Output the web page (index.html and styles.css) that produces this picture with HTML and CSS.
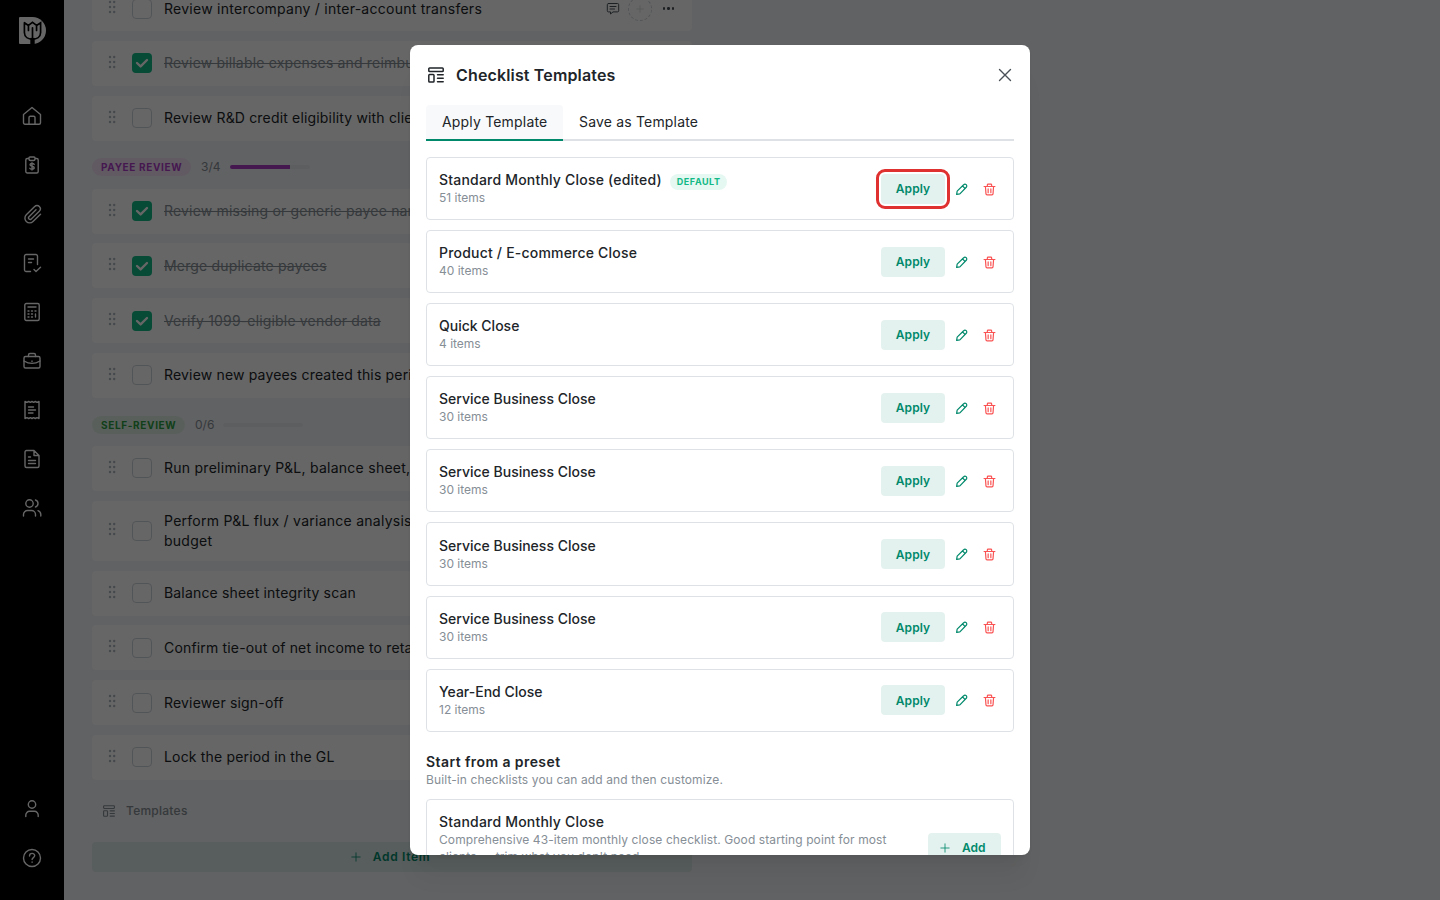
FILE: index.html
```html
<!DOCTYPE html>
<html lang="en">
<head>
  <meta charset="utf-8">
  <title>Checklist Templates</title>
  <link rel="stylesheet" href="styles.css">
</head>
<body>

  <svg class="sprite" width="0" height="0">
    <symbol id="i-grip" viewBox="0 0 8 14">
      <g fill="currentColor" stroke="none"><circle cx="2" cy="2" r="1.2"/><circle cx="6.2" cy="2" r="1.2"/><circle cx="2" cy="7" r="1.2"/><circle cx="6.2" cy="7" r="1.2"/><circle cx="2" cy="12" r="1.2"/><circle cx="6.2" cy="12" r="1.2"/></g>
    </symbol>
    <symbol id="i-template" viewBox="0 0 16 16">
      <rect x=".8" y="1" width="14.4" height="3.6" rx=".8"/><rect x=".8" y="7.6" width="5.2" height="7.4" rx=".8"/><path d="M9.5 7.8h5.7M9.5 11.3h5.7M9.5 14.8h5.7"/>
    </symbol>
    <symbol id="i-pencil" viewBox="0 0 24 24">
      <path d="M3 21l1-6L16 3.200a3 3 0 0 1 4.800 4.600L9 20zM14 5.500l4.500 4.500"/>
    </symbol>
    <symbol id="i-trash" viewBox="0 0 24 24">
      <path d="M2 6.500h20M4.500 7l1 13a2 2 0 0 0 2 2h9a2 2 0 0 0 2-2l1-13M8 6V3.500A1.500 1.500 0 0 1 9.500 2h5A1.500 1.500 0 0 1 16 3.500V6M9.500 11v7M14.500 11v7"/>
    </symbol>
    <symbol id="i-plus" viewBox="0 0 12 12"><path d="M6 1v10M1 6h10"/></symbol>
    <symbol id="i-check" viewBox="0 0 20 20"><path d="M5 10l3.600 3.400L15 7"/></symbol>
  </svg>

  <div class="app">
    <nav class="sidebar">
      <svg class="logo" viewBox="0 0 80 80">
        <path class="logo-base" d="M3 0H40A40 40 0 0 1 40 80H3Q0 80 0 77V3Q0 0 3 0Z"/>
        <path class="logo-line" d="M16 17V46C16 60 28 66 40 66C52 66 64 60 64 46V17L52 25V40M16 17L28 25V40M28 25L40 16L52 25M40 32V66"/>
        <path class="logo-stem" d="M40 62V80"/>
      </svg>
      <div class="nav-main">
        <svg class="nav-icon" viewBox="0 0 20 20"><path d="M1.500 8.500L10 1.500l8.500 7v8.300a1.500 1.500 0 0 1-1.500 1.500H3a1.500 1.500 0 0 1-1.500-1.500zM7 18v-6.500a1.300 1.300 0 0 1 1.300-1.300h3.400a1.300 1.300 0 0 1 1.300 1.300V18"/></svg>
        <svg class="nav-icon" viewBox="0 0 20 20"><rect x="3.800" y="3.500" width="12.400" height="14.500" rx="1.500"/><path class="solid" d="M8 2h4a1 1 0 0 1 1 1v1a1.500 1.500 0 0 1-1.500 1.500h-3A1.500 1.500 0 0 1 7 4V3a1 1 0 0 1 1-1z"/><path d="M12.200 9.400c-.4-.6-1.200-.9-2.200-.9-1.200 0-2 .5-2 1.300 0 2 4.200.9 4.200 3 0 .9-.9 1.400-2.200 1.400-1.100 0-1.900-.3-2.200-.9M10 7.800v7.200"/></svg>
        <svg class="nav-icon" viewBox="0 0 20 20"><path d="M14 5.800l-7 7a1.500 1.500 0 0 0 2.300 2.200l8-7.800a3.200 3.200 0 0 0-4.600-4.700l-8.400 8.300a4.700 4.700 0 0 0 6.700 6.700l7.500-7.300"/></svg>
        <svg class="nav-icon" viewBox="0 0 20 20"><path d="M8.500 18.500H4A1.800 1.800 0 0 1 2.500 17V3A1.800 1.800 0 0 1 4 1.500h10A1.800 1.800 0 0 1 15.500 3v8.500M6.500 6h5M6.500 9.500h3M12 16.500l2 2 4.500-4.200"/></svg>
        <svg class="nav-icon" viewBox="0 0 20 20"><rect x="2.800" y="1.500" width="14.400" height="17" rx="1.500"/><path d="M6 5h8M6 9h1M9.500 9h1M13 9h1M6 12h1M9.500 12h1M6 15h1M9.500 15h1M13.500 12v3"/></svg>
        <svg class="nav-icon" viewBox="0 0 20 20"><rect x="2" y="5.500" width="16" height="11.500" rx="1.500"/><path d="M6.500 5.500V4A1.500 1.500 0 0 1 8 2.500h4A1.500 1.500 0 0 1 13.500 4v1.500M2 10c5 3 11 3 16 0M10 10v.5"/></svg>
        <svg class="nav-icon" viewBox="0 0 20 20"><path d="M3 1.500l2 .8 1.700-.8 1.700.8 1.600-.8 1.600.8 1.700-.8 1.700.8 2-.8v17l-2-.8-1.700.8-1.700-.8-1.600.8-1.600-.8-1.700.8-1.700-.8-2 .8zM6.500 7h5M6.500 10h7M6.500 13h4.500"/></svg>
        <svg class="nav-icon" viewBox="0 0 20 20"><path d="M12 1.500H4.500A1.500 1.500 0 0 0 3 3v14a1.500 1.500 0 0 0 1.500 1.500h11A1.500 1.500 0 0 0 17 17V6.500zM12 1.500v5h5M6.500 8h2M6.500 11.500h7M6.500 14.500h7"/></svg>
        <svg class="nav-icon" viewBox="0 0 20 20"><circle cx="7.500" cy="5.500" r="3.700"/><path d="M1.500 18v-1.500a4 4 0 0 1 4-4h4a4 4 0 0 1 4 4V18M13.500 2a3.700 3.700 0 0 1 0 7M16 12.700a4 4 0 0 1 2.800 3.800V18"/></svg>
      </div>
      <div class="nav-bottom">
        <svg class="nav-icon" viewBox="0 0 20 20"><circle cx="10" cy="5.500" r="3.700"/><path d="M3.800 17.500v-1.500a3.700 3.700 0 0 1 3.700-3.700h5a3.700 3.700 0 0 1 3.700 3.700v1.500"/></svg>
        <svg class="nav-icon" viewBox="0 0 20 20"><circle cx="10" cy="10" r="8.500"/><path d="M7.500 8c0-3.500 5.200-3.300 5.200-.4 0 2-2.600 2-2.600 4M10.100 14v.3"/></svg>
      </div>
    </nav>

    <main class="checklist">
      <div class="task">
        <svg class="grip"><use href="#i-grip"/></svg><span class="box"></span>
        <span class="task-name wide">Review intercompany / inter-account transfers</span>
        <div class="task-tools">
          <svg class="comment" viewBox="0 0 14 14"><path d="M2.500 1.500h9a1.200 1.200 0 0 1 1.200 1.200v6a1.200 1.200 0 0 1-1.200 1.200H7L4.500 12V9.900h-2a1.200 1.200 0 0 1-1.200-1.200v-6a1.200 1.200 0 0 1 1.200-1.200zM4 4.500h6M4 7h4.500"/></svg>
          <span class="assign"><svg class="assign-plus"><use href="#i-plus"/></svg></span>
          <span class="dots"><i></i><i></i><i></i></span>
        </div>
      </div>
      <div class="task done">
        <svg class="grip"><use href="#i-grip"/></svg><span class="box"><svg><use href="#i-check"/></svg></span>
        <span class="task-name">Review billable expenses and reimbursements</span>
      </div>
      <div class="task">
        <svg class="grip"><use href="#i-grip"/></svg><span class="box"></span>
        <span class="task-name">Review R&amp;D credit eligibility with client</span>
      </div>

      <div class="section payee">
        <span class="pill">PAYEE REVIEW</span><span class="count">3/4</span><span class="progress"><span class="bar" style="width: 75%"></span></span>
      </div>
      <div class="task done">
        <svg class="grip"><use href="#i-grip"/></svg><span class="box"><svg><use href="#i-check"/></svg></span>
        <span class="task-name">Review missing or generic payee names</span>
      </div>
      <div class="task done">
        <svg class="grip"><use href="#i-grip"/></svg><span class="box"><svg><use href="#i-check"/></svg></span>
        <span class="task-name">Merge duplicate payees</span>
      </div>
      <div class="task done">
        <svg class="grip"><use href="#i-grip"/></svg><span class="box"><svg><use href="#i-check"/></svg></span>
        <span class="task-name">Verify 1099-eligible vendor data</span>
      </div>
      <div class="task">
        <svg class="grip"><use href="#i-grip"/></svg><span class="box"></span>
        <span class="task-name">Review new payees created this period</span>
      </div>

      <div class="section self">
        <span class="pill">SELF-REVIEW</span><span class="count">0/6</span><span class="progress"></span>
      </div>
      <div class="task">
        <svg class="grip"><use href="#i-grip"/></svg><span class="box"></span>
        <span class="task-name wide">Run preliminary P&amp;L, balance sheet,</span>
      </div>
      <div class="task tall">
        <svg class="grip"><use href="#i-grip"/></svg><span class="box"></span>
        <span class="task-name wide">Perform P&amp;L flux / variance analysis<br>budget</span>
      </div>
      <div class="task">
        <svg class="grip"><use href="#i-grip"/></svg><span class="box"></span>
        <span class="task-name">Balance sheet integrity scan</span>
      </div>
      <div class="task">
        <svg class="grip"><use href="#i-grip"/></svg><span class="box"></span>
        <span class="task-name">Confirm tie-out of net income to retained</span>
      </div>
      <div class="task">
        <svg class="grip"><use href="#i-grip"/></svg><span class="box"></span>
        <span class="task-name">Reviewer sign-off</span>
      </div>
      <div class="task">
        <svg class="grip"><use href="#i-grip"/></svg><span class="box"></span>
        <span class="task-name">Lock the period in the GL</span>
      </div>

      <div class="templates-link"><svg viewBox="0 0 16 16"><use href="#i-template"/></svg><span>Templates</span></div>
      <div class="add-item"><svg><use href="#i-plus"/></svg><span>Add Item</span></div>
    </main>
  </div>

  <div class="overlay">
    <div class="modal">
      <header class="modal-header">
        <svg class="modal-icon"><use href="#i-template"/></svg>
        <h2>Checklist Templates</h2>
        <svg class="close" viewBox="0 0 12 12"><path d="M.5.5l11 11M11.500.5l-11 11"/></svg>
      </header>

      <div class="tabs">
        <span class="tab active">Apply Template</span>
        <span class="tab">Save as Template</span>
      </div>

      <div class="list">
        <div class="card">
          <div class="info"><div class="name wide">Standard Monthly Close (edited) <span class="default">DEFAULT</span></div><div class="items">51 items</div></div>
          <button class="apply highlight">Apply</button><svg class="edit"><use href="#i-pencil"/></svg><svg class="delete"><use href="#i-trash"/></svg>
        </div>
        <div class="card">
          <div class="info"><div class="name wide">Product / E-commerce Close</div><div class="items">40 items</div></div>
          <button class="apply">Apply</button><svg class="edit"><use href="#i-pencil"/></svg><svg class="delete"><use href="#i-trash"/></svg>
        </div>
        <div class="card">
          <div class="info"><div class="name">Quick Close</div><div class="items">4 items</div></div>
          <button class="apply">Apply</button><svg class="edit"><use href="#i-pencil"/></svg><svg class="delete"><use href="#i-trash"/></svg>
        </div>
        <div class="card">
          <div class="info"><div class="name">Service Business Close</div><div class="items">30 items</div></div>
          <button class="apply">Apply</button><svg class="edit"><use href="#i-pencil"/></svg><svg class="delete"><use href="#i-trash"/></svg>
        </div>
        <div class="card">
          <div class="info"><div class="name">Service Business Close</div><div class="items">30 items</div></div>
          <button class="apply">Apply</button><svg class="edit"><use href="#i-pencil"/></svg><svg class="delete"><use href="#i-trash"/></svg>
        </div>
        <div class="card">
          <div class="info"><div class="name">Service Business Close</div><div class="items">30 items</div></div>
          <button class="apply">Apply</button><svg class="edit"><use href="#i-pencil"/></svg><svg class="delete"><use href="#i-trash"/></svg>
        </div>
        <div class="card">
          <div class="info"><div class="name">Service Business Close</div><div class="items">30 items</div></div>
          <button class="apply">Apply</button><svg class="edit"><use href="#i-pencil"/></svg><svg class="delete"><use href="#i-trash"/></svg>
        </div>
        <div class="card">
          <div class="info"><div class="name">Year-End Close</div><div class="items">12 items</div></div>
          <button class="apply">Apply</button><svg class="edit"><use href="#i-pencil"/></svg><svg class="delete"><use href="#i-trash"/></svg>
        </div>
      </div>

      <div class="preset-head">
        <h3>Start from a preset</h3>
        <p>Built-in checklists you can add and then customize.</p>
      </div>
      <div class="card preset">
        <div class="info">
          <div class="name wide">Standard Monthly Close</div>
          <div class="desc">Comprehensive 43-item monthly close checklist. Good starting point for most<br>clients — trim what you don't need.</div>
        </div>
        <button class="add"><svg><use href="#i-plus"/></svg><span>Add</span></button>
      </div>
    </div>
  </div>

</body>
</html>
```
FILE: styles.css
```css
* {
  box-sizing: border-box;
}

body {
  margin: 0;
  height: 900px;
  overflow: hidden;
  font-family: "Inter", sans-serif;
  font-size: 14px;
  color: #212529;
  background-color: #f3f4f7;
}

svg {
  fill: none;
  stroke: currentColor;
  stroke-linecap: round;
  stroke-linejoin: round;
  flex-shrink: 0;
}

.sprite {
  display: none;
}

h2, h3, p {
  margin: 0;
}

.app {
  display: flex;
  height: 900px;
  overflow: hidden;
}

/* sidebar */
.sidebar {
  width: 64px;
  background-color: #000;
  color: #fff;
  display: flex;
  flex-direction: column;
  align-items: center;
  padding: 17px 0 32px;
}

.logo {
  width: 27px;
  height: 27px;
}

.logo-base {
  fill: #fff;
  stroke: none;
}

.logo-line {
  stroke: #000;
  stroke-width: 5;
  stroke-linejoin: miter;
}

.logo-stem {
  stroke: #000;
  stroke-width: 13;
  stroke-linecap: butt;
}

.nav-main {
  display: flex;
  flex-direction: column;
  gap: 29px;
  margin-top: 62px;
}

.nav-icon {
  width: 20px;
  height: 20px;
  stroke-width: 1.4;
}

.nav-icon .solid {
  fill: #000;
}

.nav-bottom {
  display: flex;
  flex-direction: column;
  gap: 29px;
  margin-top: auto;
}

/* checklist */
.checklist {
  width: 600px;
  margin: -14px 0 0 28px;
}

.task {
  height: 45px;
  margin-bottom: 9.8px;
  padding: 0 16px;
  background-color: #fff;
  border-radius: 4px;
  display: flex;
  align-items: center;
}

.task.tall {
  height: 60px;
}

.grip {
  width: 8px;
  height: 14px;
  margin: -3px 16px 0 0;
  color: #adb5bd;
}

.box {
  width: 20px;
  height: 20px;
  margin-right: 12px;
  border: 1px solid #ced4da;
  border-radius: 4px;
}

.box svg {
  display: block;
  width: 20px;
  height: 20px;
  color: #fff;
  stroke-width: 2.4;
}

.done .box {
  border: none;
  background-color: #12b886;
}

.task-name {
  line-height: 20px;
  letter-spacing: 0.17px;
  white-space: nowrap;
}

.task-name.wide {
  letter-spacing: 0.26px;
}

.done .task-name {
  color: #868e96;
  text-decoration: line-through;
}

.task-tools {
  margin-left: auto;
  display: flex;
  align-items: center;
  color: #495057;
}

.comment {
  width: 14px;
  height: 14px;
  margin-right: 8px;
}

.assign {
  width: 24px;
  height: 24px;
  border: 1px dashed #ced4da;
  border-radius: 50%;
  display: flex;
  align-items: center;
  justify-content: center;
  color: #ced4da;
}

.assign-plus {
  width: 8px;
  height: 8px;
}

.dots {
  display: flex;
  gap: 2px;
  margin: 0 2px 0 11px;
}

.dots i {
  width: 2.4px;
  height: 2.4px;
  border-radius: 50%;
  background-color: #495057;
}

.section {
  height: 38.2px;
  padding-top: 8px;
  display: flex;
  align-items: flex-start;
}

.pill {
  height: 18px;
  padding: 0 9px;
  border-radius: 9px;
  font-size: 10px;
  font-weight: 700;
  line-height: 18px;
  letter-spacing: 0.65px;
  white-space: nowrap;
}

.payee .pill {
  width: 99px;
  background-color: #f3e1f7;
  color: #ae3ec9;
}

.self .pill {
  width: 93px;
  background-color: #dff0e6;
  color: #2b9e3f;
}

.count {
  margin-left: 10px;
  font-size: 12px;
  line-height: 17px;
  color: #868e96;
}

.progress {
  width: 80px;
  height: 4px;
  margin: 7px 0 0 9px;
  border-radius: 2px;
  background-color: #e9ecef;
  overflow: hidden;
}

.bar {
  display: block;
  height: 4px;
  background-color: #ae3ec9;
}

.templates-link {
  display: flex;
  align-items: center;
  gap: 11px;
  height: 20px;
  margin-top: 21px;
  padding-left: 11px;
  font-size: 12px;
  font-weight: 500;
  color: #868e96;
  letter-spacing: 0.25px;
}

.templates-link svg {
  width: 12px;
  height: 12px;
  stroke-width: 1.5;
}

.add-item {
  display: flex;
  align-items: center;
  justify-content: center;
  gap: 12px;
  height: 30px;
  margin-top: 21px;
  padding-right: 3px;
  border-radius: 4px;
  background-color: #dcebe8;
  font-size: 12px;
  font-weight: 600;
  letter-spacing: 0.65px;
  color: #00896b;
}

.add-item svg {
  width: 10px;
  height: 10px;
}

/* modal */
.overlay {
  position: absolute;
  inset: 0;
  background-color: rgba(0, 0, 0, 0.6);
  display: flex;
  align-items: center;
  justify-content: center;
}

.modal {
  width: 620px;
  height: 810px;
  padding: 0 16px;
  border-radius: 8px;
  background-color: #fff;
  overflow: hidden;
  box-shadow: 0 1px 3px rgba(0, 0, 0, 0.05), 0 28px 23px -7px rgba(0, 0, 0, 0.05), 0 12px 12px -7px rgba(0, 0, 0, 0.04);
}

.modal-header {
  height: 60px;
  padding: 0 3px 0 2px;
  display: flex;
  align-items: center;
}

.modal-icon {
  width: 16px;
  height: 16px;
  stroke-width: 1.5;
}

.modal-header h2 {
  margin-left: 12px;
  font-size: 16px;
  font-weight: 600;
  letter-spacing: 0.15px;
}

.close {
  width: 12px;
  height: 12px;
  margin-left: auto;
  color: #495057;
  stroke-width: 1.4;
  overflow: visible;
}

.tabs {
  height: 36px;
  display: flex;
  border-bottom: 2px solid #dee2e6;
}

.tab {
  width: 137px;
  height: 36px;
  padding-left: 16px;
  line-height: 34px;
  letter-spacing: 0.18px;
  white-space: nowrap;
}

.tab.active {
  background-color: #f8f9fa;
  border-bottom: 2px solid #00896b;
  border-radius: 4px 4px 0 0;
}

.list {
  display: flex;
  flex-direction: column;
  gap: 10px;
  margin-top: 16px;
}

.card {
  height: 63.1px;
  padding: 0 12px;
  border: 1px solid #dee2e6;
  border-radius: 4px;
  display: flex;
  align-items: center;
}

.info {
  flex: 1;
  white-space: nowrap;
}

.name {
  display: flex;
  align-items: center;
  height: 20px;
  font-weight: 500;
  line-height: 20px;
}

.name.wide {
  letter-spacing: 0.2px;
}

.default {
  height: 16px;
  margin: 3px 0 0 8px;
  padding: 0 6px 0 7px;
  border-radius: 8px;
  background-color: #e6f8f2;
  color: #12b886;
  font-size: 9px;
  font-weight: 700;
  line-height: 16px;
  letter-spacing: 0.55px;
}

.items,
.desc {
  font-size: 12px;
  color: #868e96;
}

.items {
  height: 17px;
  line-height: 16px;
}

.desc {
  margin-top: -1px;
  line-height: 17px;
  letter-spacing: 0.1px;
}

button {
  height: 30px;
  padding: 0;
  border: none;
  border-radius: 4px;
  background-color: #e4f2ef;
  color: #00896b;
  font-family: inherit;
  font-size: 12px;
  font-weight: 600;
}

.apply {
  width: 64px;
  margin-right: 10px;
  letter-spacing: 0.1px;
}

.highlight {
  outline: 3px solid #e03131;
  outline-offset: 2px;
}

.edit,
.delete {
  width: 13px;
  height: 13px;
  margin-top: 1px;
  stroke-width: 2.2;
}

.edit {
  color: #00896b;
  margin-right: 15px;
}

.delete {
  color: #fa5252;
  margin-right: 5px;
}

.preset-head {
  margin: 20px 0 11px;
}

.preset-head h3 {
  font-size: 14px;
  font-weight: 600;
  line-height: 20px;
  letter-spacing: 0.42px;
}

.preset-head p {
  font-size: 12px;
  line-height: 16px;
  letter-spacing: 0.11px;
  color: #868e96;
}

.preset {
  height: 98px;
  align-items: flex-start;
  padding-top: 12px;
}

.add {
  width: 73px;
  margin-top: 21px;
  display: flex;
  align-items: center;
  gap: 12px;
  padding-left: 12px;
}

.add svg {
  width: 10px;
  height: 10px;
}
```
